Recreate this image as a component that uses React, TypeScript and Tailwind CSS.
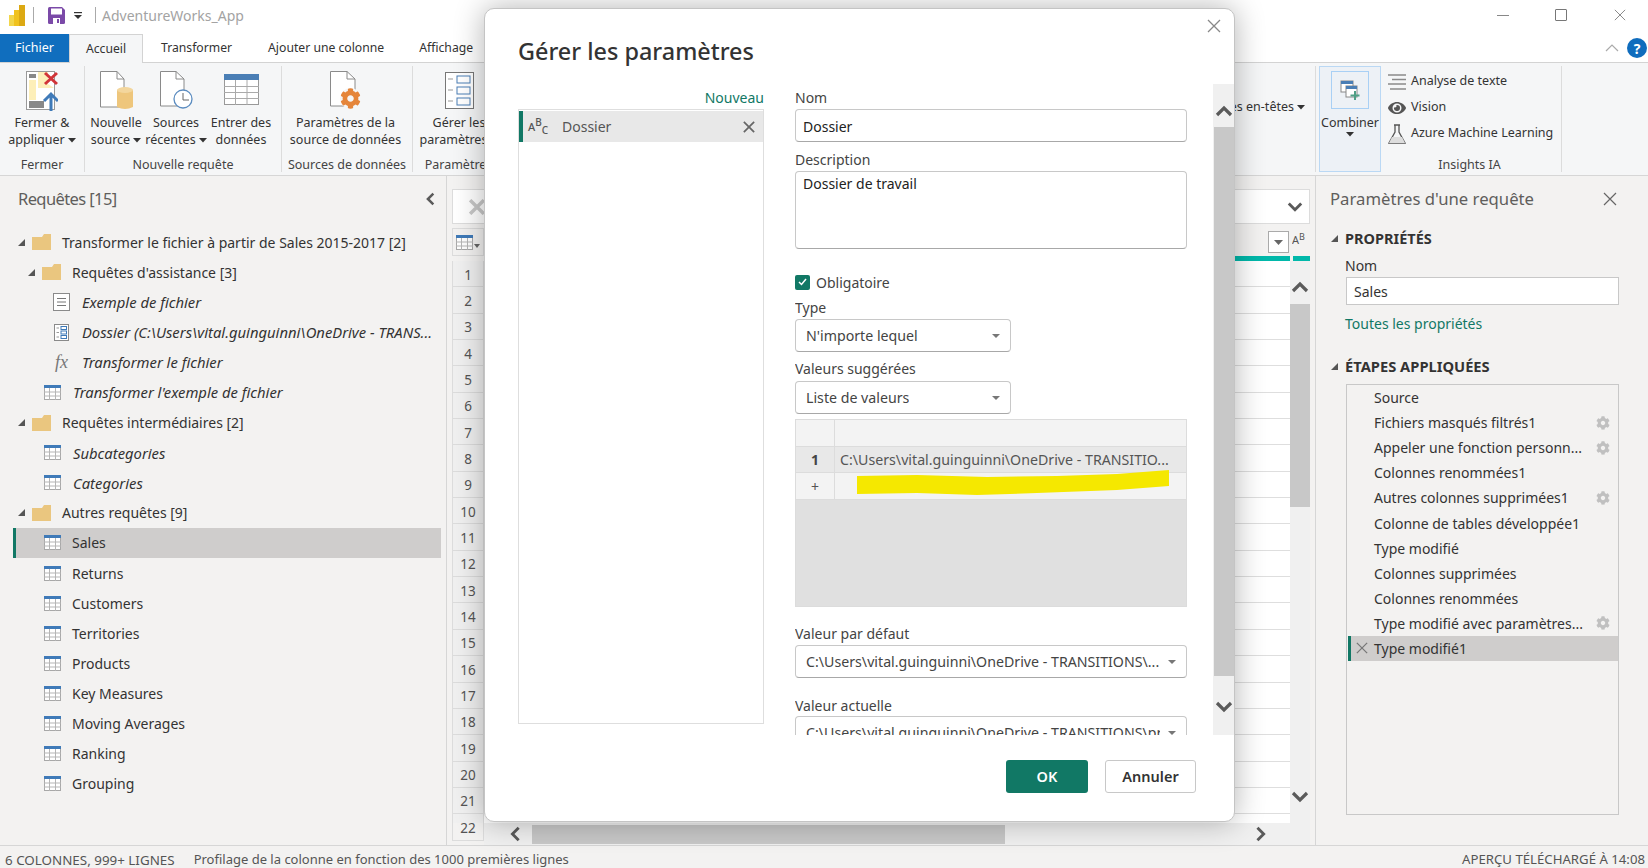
import React from 'react';
import { FaCog, FaEye } from 'react-icons/fa';

const Chev = ({ d, className = '' }: { d: 'up' | 'down' | 'left' | 'right'; className?: string }) => {
  const p = { up: '2,12 9,5 16,12', down: '2,5 9,12 16,5', left: '12,2 5,9 12,16', right: '5,2 12,9 5,16' }[d];
  return (
    <svg width="18" height="18" viewBox="0 0 18 18" className={className}>
      <polyline points={p} fill="none" stroke="#5a5a5a" strokeWidth="3.2" />
    </svg>
  );
};

const X = ({ s = 14, c = '#777', w = 1.3 }: { s?: number; c?: string; w?: number }) => (
  <svg width={s} height={s} viewBox="0 0 14 14">
    <path d="M1 1L13 13M13 1L1 13" stroke={c} strokeWidth={w} fill="none" />
  </svg>
);

const Tri = () => (
  <svg width="9" height="9" viewBox="0 0 9 9"><polygon points="8,1 8,8 1,8" fill="#555" /></svg>
);

const TableIco = () => (
  <svg width="17" height="15" viewBox="0 0 17 15">
    <rect x="0.5" y="0.5" width="16" height="14" fill="#fff" stroke="#a8a8a8" />
    <rect x="0" y="0" width="17" height="3" fill="#3f7ab8" />
    <path d="M0 7H17M0 11H17M5.5 3V15M11.5 3V15" stroke="#b5b5b5" strokeWidth="1" />
  </svg>
);

const Folder = () => (
  <svg width="19" height="16" viewBox="0 0 19 16">
    <path d="M0 3H10L12 0H19V16H0Z" fill="#eac67f" />
  </svg>
);

const DocIco = () => (
  <svg width="17" height="18" viewBox="0 0 17 18">
    <rect x="0.5" y="0.5" width="16" height="17" fill="#fff" stroke="#8a8a8a" />
    <path d="M4 5.5H13M4 9H13M4 12.5H13" stroke="#777" />
  </svg>
);

const ParamIco = () => (
  <svg width="15" height="17" viewBox="0 0 15 17">
    <rect x="0.5" y="0.5" width="14" height="16" fill="#fff" stroke="#8a8a8a" />
    <path d="M2.5 4H5M2.5 8.500H5M2.500 13H5" stroke="#999" />
    <rect x="7" y="2.500" width="5.500" height="3" fill="none" stroke="#3f7ab8" />
    <rect x="7" y="7" width="5.500" height="3" fill="none" stroke="#3f7ab8" />
    <rect x="7" y="11.500" width="5.500" height="3" fill="none" stroke="#3f7ab8" />
  </svg>
);

type Q = { n: string; pad: number; ico: 'f' | 't' | 'd' | 'p' | 'x'; it?: boolean; tri?: boolean; sel?: boolean };
const queries: Q[] = [
  { n: 'Transformer le fichier à partir de Sales 2015-2017 [2]', pad: 18, ico: 'f', tri: true },
  { n: "Requêtes d'assistance [3]", pad: 28, ico: 'f', tri: true },
  { n: 'Exemple de fichier', pad: 53, ico: 'd', it: true },
  { n: 'Dossier (C:\\Users\\vital.guinguinni\\OneDrive - TRANS...', pad: 53, ico: 'p', it: true },
  { n: 'Transformer le fichier', pad: 53, ico: 'x', it: true },
  { n: "Transformer l'exemple de fichier", pad: 44, ico: 't', it: true },
  { n: 'Requêtes intermédiaires [2]', pad: 18, ico: 'f', tri: true },
  { n: 'Subcategories', pad: 44, ico: 't', it: true },
  { n: 'Categories', pad: 44, ico: 't', it: true },
  { n: 'Autres requêtes [9]', pad: 18, ico: 'f', tri: true },
  { n: 'Sales', pad: 44, ico: 't', sel: true },
  { n: 'Returns', pad: 44, ico: 't' },
  { n: 'Customers', pad: 44, ico: 't' },
  { n: 'Territories', pad: 44, ico: 't' },
  { n: 'Products', pad: 44, ico: 't' },
  { n: 'Key Measures', pad: 44, ico: 't' },
  { n: 'Moving Averages', pad: 44, ico: 't' },
  { n: 'Ranking', pad: 44, ico: 't' },
  { n: 'Grouping', pad: 44, ico: 't' },
];

const steps: [string, boolean][] = [
  ['Source', false],
  ['Fichiers masqués filtrés1', true],
  ['Appeler une fonction personn...', true],
  ['Colonnes renommées1', false],
  ['Autres colonnes supprimées1', true],
  ['Colonne de tables développée1', false],
  ['Type modifié', false],
  ['Colonnes supprimées', false],
  ['Colonnes renommées', false],
  ['Type modifié avec paramètres...', true],
];

const Caret = () => (
  <svg width="8" height="5" viewBox="0 0 8 5" className="inline-block ml-[3px] align-middle"><polygon points="0,0 8,0 4,4.500" fill="#333" /></svg>
);

const RibbonBtn = ({ w, icon, l1, l2, caret }: { w: number; icon: React.ReactNode; l1: string; l2: string; caret?: boolean }) => (
  <div className="flex flex-col items-center shrink-0" style={{ width: w }}>
    <div className="h-[43px] flex items-start justify-center">{icon}</div>
    <div className="text-center text-[12.5px] leading-[17px] text-[#333] whitespace-nowrap">
      <div>{l1}</div>
      <div>{l2}{caret && <Caret />}</div>
    </div>
  </div>
);

const Group = ({ w, label, children }: { w: number; label: string; children: React.ReactNode }) => (
  <div className="flex flex-col my-[3px] border-r border-[#dcdcdc] shrink-0 overflow-hidden" style={{ width: w }}>
    <div className="flex-1 flex pt-[5px] justify-start">{children}</div>
    <div className="h-[16px] text-center text-[12.5px] leading-[18px] text-[#444] whitespace-nowrap">{label}</div>
  </div>
);

const Select = ({ text, w }: { text: string; w?: number }) => (
  <div className="h-[33px] shrink-0 flex items-center justify-between rounded-[4px] border border-[#c8c8c8] border-b-[#a8a8a8] bg-white pl-[10px] pr-[10px] text-[14.2px] text-[#444]" style={w ? { width: w } : undefined}>
    <span className="whitespace-nowrap overflow-hidden">{text}</span>
    <svg width="8" height="4" viewBox="0 0 8 4" className="shrink-0 ml-2"><polygon points="0,0 8,0 4,4" fill="#777" /></svg>
  </div>
);

const Label = ({ t, cls }: { t: string; cls: string }) => (
  <div className={`text-[14px] text-[#444] flex items-center ${cls}`}>{t}</div>
);

export default function App() {
  const rows = Array.from({ length: 22 }, (_, i) => i + 1);
  return (
    <div className="relative w-[1648px] h-[868px] overflow-hidden bg-[#f3f2f1] flex flex-col font-['Noto_Sans',sans-serif] text-[#333]">
      {/* title bar */}
      <div className="h-[34px] shrink-0 bg-white flex items-center relative">
        <svg width="16" height="21" viewBox="0 0 16 21" className="ml-[9px] -mt-[4px]">
          <rect x="0" y="10" width="6" height="11" fill="#f2d64b" />
          <rect x="5" y="5" width="6" height="16" fill="#f0c21e" />
          <rect x="10" y="0" width="6" height="21" fill="#dca913" />
        </svg>
        <div className="w-px h-[16px] bg-[#aaa] ml-[8px] -mt-[4px]" />
        <svg width="17" height="17" viewBox="0 0 17 17" className="ml-[14px] -mt-[4px]">
          <path d="M0 1.500Q0 0 1.500 0H14L17 3V15.500Q17 17 15.500 17H1.500Q0 17 0 15.500Z" fill="#7b4aa8" />
          <rect x="3" y="1.500" width="11" height="6" fill="#fff" />
          <rect x="5" y="11" width="7" height="6" fill="#fff" />
          <rect x="9" y="12" width="2" height="4" fill="#7b4aa8" />
        </svg>
        <svg width="8" height="8" viewBox="0 0 8 8" className="ml-[9px] -mt-[3px]">
          <rect x="0" y="0" width="8" height="1.200" fill="#333" /><polygon points="0,3 8,3 4,7" fill="#333" />
        </svg>
        <div className="w-px h-[16px] bg-[#aaa] ml-[13px] -mt-[4px]" />
        <div className="ml-[6px] -mt-[4px] text-[14px] text-[#a3a3a3]">AdventureWorks_App</div>
        <div className="flex-1" />
        <div className="flex items-center -mt-[4px]">
          <div className="w-[12px] h-px bg-[#888] mr-[46px]" />
          <div className="w-[12px] h-[12px] border border-[#777] rounded-[1px] mr-[47px]" />
          <div className="mr-[22px]"><X s={12} c="#777" w={1} /></div>
        </div>
      </div>
      {/* tabs */}
      <div className="h-[29px] shrink-0 bg-white flex items-stretch border-b border-[#d3d3d3] text-[12.2px] text-[#333] relative">
        <div className="w-[69px] bg-[#106ebe] text-white flex items-center justify-center text-[12.5px]">Fichier</div>
        <div className="w-[74px] h-[29px] bg-[#f5f6f7] border border-b-0 border-[#d3d3d3] flex items-center justify-center">Accueil</div>
        <div className="ml-[18px] flex items-center">Transformer</div>
        <div className="ml-[36px] flex items-center">Ajouter une colonne</div>
        <div className="ml-[35px] flex items-center">Affichage</div>
        <div className="flex-1" />
        <div className="flex items-center gap-[8px] pr-[1px]">
          <svg width="14" height="8" viewBox="0 0 14 8"><polyline points="1,7 7,1 13,7" fill="none" stroke="#aaa" strokeWidth="1.200" /></svg>
          <div className="w-[20px] h-[20px] rounded-full bg-[#0f6cbd] text-white text-[14px] font-bold flex items-center justify-center">?</div>
        </div>
      </div>
      {/* ribbon */}
      <div className="h-[113px] shrink-0 bg-[#f5f6f7] border-b border-[#d6d6d6] flex">
        <Group w={85} label="Fermer">
          <RibbonBtn w={84} l1="Fermer &" l2="appliquer" caret icon={
            <svg width="32" height="40" viewBox="0 0 32 40">
              <rect x="0.500" y="0.500" width="28" height="38" fill="#fff" stroke="#999" />
              <path d="M12 1H22V13L28 17H12Z" fill="#fdefb9" />
              <rect x="3" y="3" width="7" height="4" fill="#888" /><rect x="3" y="9" width="7" height="20" fill="#fdefb9" />
              <rect x="3" y="30" width="15" height="7" fill="#888" />
              <path d="M19 2L31 13M31 2L19 13" stroke="#d13438" strokeWidth="3" />
              <path d="M25 40V24M18 30L25 23L32 30" stroke="#3f7ab8" strokeWidth="3" fill="none" />
            </svg>} />
        </Group>
        <Group w={197} label="Nouvelle requête">
          <RibbonBtn w={62} l1="Nouvelle" l2="source" caret icon={
            <svg width="33" height="40" viewBox="0 0 33 40">
              <path d="M0.500 0.500H17L24 8V36H0.500Z" fill="#fff" stroke="#8a8a8a" />
              <path d="M17 0.500V8H24" fill="none" stroke="#8a8a8a" />
              <path d="M17 19Q25 16 33 19V36Q25 40 17 36Z" fill="#eec67c" />
              <ellipse cx="25" cy="19" rx="8" ry="3" fill="#f3d69d" />
            </svg>} />
          <RibbonBtn w={58} l1="Sources" l2="récentes" caret icon={
            <svg width="33" height="38" viewBox="0 0 33 38">
              <path d="M0.500 0.500H16L24 8V35H0.500Z" fill="#fff" stroke="#8a8a8a" />
              <path d="M16 0.500V8H24" fill="none" stroke="#8a8a8a" />
              <circle cx="23" cy="28" r="9" fill="#fff" stroke="#5b8cc0" strokeWidth="1.300" />
              <path d="M23 22V29H29" fill="none" stroke="#666" />
            </svg>} />
          <RibbonBtn w={72} l1="Entrer des" l2="données" icon={
            <svg width="35" height="31" viewBox="0 0 35 31" className="mt-[3px]">
              <rect x="0.500" y="0.500" width="34" height="30" fill="#fff" stroke="#999" />
              <rect width="35" height="6" fill="#4a7eb5" />
              <path d="M0 12.500H35M0 18.500H35M0 24.500H35M11.500 6V31M23 6V31" stroke="#aaa" />
            </svg>} />
        </Group>
        <Group w={131} label="Sources de données">
          <RibbonBtn w={127} l1="Paramètres de la" l2="source de données" icon={
            <div className="relative w-[32px] h-[38px]">
              <svg width="26" height="36" viewBox="0 0 26 36">
                <path d="M0.500 0.500H17L25 8V35H0.500Z" fill="#fff" stroke="#8a8a8a" />
                <path d="M17 0.500V8H25" fill="none" stroke="#8a8a8a" />
              </svg>
              <FaCog className="absolute left-[10px] top-[17px] bg-[#f5f6f7] rounded-full" size={21} color="#e5853a" />
            </div>} />
        </Group>
        <Group w={92} label="Paramètres">
          <RibbonBtn w={92} l1="Gérer les" l2="paramètres" caret icon={
            <svg width="29" height="37" viewBox="0 0 29 37" className="mt-[1px]">
              <rect x="0.500" y="0.500" width="28" height="36" fill="#fff" stroke="#777" />
              <path d="M3 7H8M3 18H8M3 29H8" stroke="#999" />
              <rect x="12" y="4" width="13" height="7" fill="none" stroke="#4a7eb5" />
              <rect x="12" y="15" width="13" height="7" fill="none" stroke="#4a7eb5" />
              <rect x="12" y="26" width="13" height="7" fill="none" stroke="#4a7eb5" />
            </svg>} />
        </Group>
        <div className="w-[811px] shrink-0 my-[3px] border-r border-[#dcdcdc] flex flex-col items-end pr-[10px] pt-[32px] text-[12.5px] text-[#333] whitespace-nowrap overflow-hidden">
          <div>Utiliser la première ligne pour les en-têtes<Caret /></div>
        </div>
        <div className="w-[62px] shrink-0 my-[3px] ml-[3px] bg-[#edf1f6] border border-[#bad8f4] flex flex-col items-center pt-[4px] text-[12.5px] leading-[17px]">
          <div className="w-[38px] h-[38px] border border-[#a9d0f5] flex items-center justify-center">
            <svg width="20" height="20" viewBox="0 0 20 20">
              <rect x="1" y="1" width="12" height="11" fill="#fff" stroke="#888" />
              <rect x="1" y="1" width="12" height="3" fill="#4a7eb5" />
              <rect x="6" y="6" width="11" height="11" fill="#fff" stroke="#888" />
              <rect x="6" y="6" width="11" height="3" fill="#4a7eb5" />
              <path d="M15 11V20M10.500 15.500H19.500" stroke="#4f9f86" strokeWidth="2" />
            </svg>
          </div>
          <div className="mt-[5px]">Combiner</div>
          <div className="mt-[1px]"><svg width="8" height="5" viewBox="0 0 8 5"><polygon points="0,0 8,0 4,4.500" fill="#333" /></svg></div>
        </div>
        <div className="w-[181px] shrink-0 my-[3px] border-r border-[#dcdcdc] flex flex-col pl-[7px] text-[12.5px] text-[#333]">
          <div className="flex flex-col gap-[9px] pt-[7px]">
            <div className="h-[17px] flex items-center gap-[5px]">
              <svg width="18" height="16" viewBox="0 0 18 16"><path d="M0 1H18M4 5.500H18M0 10H18M2 15H18" stroke="#8a8a8a" strokeWidth="1.300" /></svg>
              <span>Analyse de texte</span>
            </div>
            <div className="h-[17px] flex items-center gap-[5px]"><FaEye size={18} color="#555" /><span>Vision</span></div>
            <div className="h-[17px] flex items-center gap-[5px]">
              <svg width="18" height="20" viewBox="0 0 18 20"><path d="M6 1H12M7 1V8L1 19H17L11 8V1" fill="none" stroke="#555" strokeWidth="1.300" /><path d="M1 19H17L14 13H4Z" fill="#ddd" /></svg>
              <span>Azure Machine Learning</span>
            </div>
          </div>
          <div className="mt-auto h-[16px] text-center leading-[18px] text-[#444] pr-[10px]">Insights IA</div>
        </div>
        <div className="flex-1" />
      </div>
      {/* main */}
      <div className="flex-1 flex min-h-0">
        <div className="w-[447px] shrink-0 border-r border-[#d6d6d6] flex flex-col">
          <div className="h-[51px] shrink-0 flex items-center justify-between pl-[18px] pr-[8px] pb-[5px] text-[16.5px] tracking-[-0.6px] text-[#605e5c]">
            <span>Requêtes [15]</span>
            <Chev d="left" className="w-[14px] h-[14px]" />
          </div>
          <div className="flex flex-col">
            {queries.map((q) => (
              <div key={q.n} className={`h-[30.1px] flex items-center ml-[13px] w-[428px] ${q.sel ? 'bg-[#cfcdcc] border-l-[3px] border-[#117865]' : ''}`}>
                <div className="relative flex items-center" style={{ paddingLeft: q.pad - 13 - (q.sel ? 3 : 0) }}>
                  {q.tri && <div className="mr-[6px] -ml-[1px] flex"><Tri /></div>}
                  <div className={`flex justify-center ${q.ico === 'f' ? 'w-[19px] mr-[11px]' : q.it ? 'w-[17px] mr-[12px]' : 'w-[17px] mr-[11px]'}`}>
                    {q.ico === 'f' && <Folder />}
                    {q.ico === 't' && <TableIco />}
                    {q.ico === 'd' && <DocIco />}
                    {q.ico === 'p' && <ParamIco />}
                    {q.ico === 'x' && <span className="font-['Liberation_Serif',serif] italic text-[18px] leading-[17px] text-[#777]">fx</span>}
                  </div>
                  <span className={`whitespace-nowrap ${q.it ? 'italic text-[14.8px]' : 'text-[14px]'}`}>{q.n}</span>
                </div>
              </div>
            ))}
          </div>
        </div>
        {/* middle */}
        <div className="w-[869px] shrink-0 border-r border-[#d6d6d6] flex flex-col pl-[5px] pr-[5px] pt-[13px]">
          <div className="h-[35px] shrink-0 bg-white border border-[#dcdcdc] flex items-center justify-between px-[16px]">
            <X s={16} c="#c8c8c8" w={3} />
            <Chev d="down" className="w-[16px] h-[16px] -mr-[10px]" />
          </div>
          <div className="h-[33px] shrink-0 mt-[4px] flex">
            <div className="w-[32px] flex items-center justify-center gap-[1px] border border-[#dcdcdc] h-[28px]">
              <TableIco />
              <svg width="6" height="4" viewBox="0 0 6 4" className="mt-[8px]"><polygon points="0,0 6,0 3,4" fill="#666" /></svg>
            </div>
            <div className="flex-1" />
            <div className="w-[21px] flex flex-col"><div className="h-[22px] mt-[3px] bg-white border border-[#aaa] flex items-center justify-center"><svg width="9" height="5" viewBox="0 0 9 5"><polygon points="0,0 9,0 4.500,5" fill="#666" /></svg></div></div>
            <div className="w-[3px]" />
            <div className="w-[18px] text-[11px] overflow-hidden whitespace-nowrap pt-[4px] text-[#555]">A<sup className="text-[9px]">B</sup></div>
          </div>
          <div className="flex-1 flex min-h-0 relative">
            <div className="w-[32px] shrink-0 flex flex-col bg-[#f0f0f0]">
              {rows.map((r) => (
                <div key={r} className="h-[26.35px] shrink-0 border border-t-0 border-[#dcdcdc] flex items-center justify-center pt-[2px] text-[13.5px] text-[#555]">{r}</div>
              ))}
            </div>
            <div className="flex-1 flex flex-col bg-white">
              {rows.map((r) => (
                <div key={r} className="h-[26.35px] shrink-0 border-b border-[#dedede]" />
              ))}
            </div>
            <div className="w-[20px] shrink-0 bg-[#f0f0f0] flex flex-col items-center">
              <div className="h-[43px] flex items-start justify-center pt-[18px]"><Chev d="up" /></div>
              <div className="w-full h-[203px] bg-[#c8c8c8]" />
              <div className="flex-1" />
              <div className="h-[35px] flex items-start"><Chev d="down" /></div>
            </div>
            <div className="absolute left-[780px] -top-[5px] w-[58px] h-[5px] bg-[#01b8aa]" />
            <div className="absolute left-[841px] -top-[5px] w-[17px] h-[5px] bg-[#01b8aa]" />
          </div>
          <div className="h-[22px] shrink-0 bg-[#f0f0f0] flex items-center ml-[32px] relative">
            <Chev d="left" className="ml-[24px] w-[16px] h-[16px]" />
            <div className="w-[473px] h-[19px] bg-[#c8c8c8] ml-[8px]" />
            <Chev d="right" className="absolute left-[769px] w-[16px] h-[16px]" />
          </div>
        </div>
        {/* right */}
        <div className="flex-1 flex flex-col pl-[14px]">
          <div className="h-[47px] shrink-0 flex items-center justify-between pr-[31px] pb-[1px] text-[16.7px] text-[#605e5c]">
            <span>Paramètres d'une requête</span>
            <X s={14} c="#666" w={1.200} />
          </div>
          <div className="h-[31px] flex items-center gap-[6px] font-bold text-[14.5px] leading-none"><span className="flex"><Tri /></span>PROPRIÉTÉS</div>
          <div className="pl-[15px] h-[23px] flex items-center text-[14px]">Nom</div>
          <div className="ml-[16px] w-[273px] h-[28px] border border-[#c8c8c8] bg-white flex items-center pl-[7px] text-[14px]">Sales</div>
          <div className="pl-[15px] mt-[6px] h-[24px] flex items-center text-[14px] text-[#117865]">Toutes les propriétés</div>
          <div className="mt-[19px] h-[24px] flex items-center gap-[6px] font-bold text-[14.7px]"><span className="flex"><Tri /></span>ÉTAPES APPLIQUÉES</div>
          <div className="ml-[16px] w-[273px] h-[431px] mt-[6px] border border-[#c8c8c8] flex flex-col text-[14px]">
            {steps.map(([t, g]) => (
              <div key={t} className="h-[25.1px] shrink-0 flex items-center justify-between pl-[27px] pr-[8px]">
                <span className="whitespace-nowrap">{t}</span>
                {g && <FaCog size={14} color="#c0c0c0" />}
              </div>
            ))}
            <div className="h-[25.1px] shrink-0 ml-[1px] bg-[#cfcdcc] border-l-[3px] border-[#117865] flex items-center pl-[5px] gap-[6px]">
              <X s={12} c="#777" w={1.500} /><span>Type modifié1</span>
            </div>
          </div>
        </div>
      </div>
      {/* status */}
      <div className="h-[23px] shrink-0 border-t border-[#d6d6d6] bg-[#f3f2f1] flex items-center justify-between pl-[5px] pr-[3px] pt-[6px] text-[13px] text-[#555]">
        <div className="flex gap-[19px]"><span className="text-[13.4px]">6 COLONNES, 999+ LIGNES</span><span>Profilage de la colonne en fonction des 1000 premières lignes</span></div>
        <span className="text-[13.2px]">APERÇU TÉLÉCHARGÉ À 14:08</span>
      </div>

      {/* dialog */}
      <div className="absolute left-[484px] top-[8px] w-[751px] h-[814px] bg-white rounded-[10px] border border-[#c4c4c4] shadow-[0_0_30px_rgba(0,0,0,0.3)] flex flex-col">
        <div className="h-[75px] shrink-0 relative pl-[33px] pt-[24px] text-[23.4px] leading-[36px] text-[#333] font-medium">
          Gérer les paramètres
          <div className="absolute right-[13px] top-[10px]"><X s={14} c="#888" w={1.300} /></div>
        </div>
        <div className="h-[651px] shrink-0 flex pl-[33px]">
          <div className="w-[246px] shrink-0 flex flex-col">
            <div className="h-[25px] text-right text-[14px] text-[#117865] leading-[28px]">Nouveau</div>
            <div className="h-[615px] border border-[#dedede] pt-[1px]">
              <div className="h-[31px] bg-[#e8e8e8] border-l-[4px] border-[#117865] flex items-center justify-between pl-[5px] pr-[8px] text-[14px] text-[#555]">
                <div className="flex items-center">
                  <span className="text-[11px] leading-none text-[#555] w-[34px] font-medium">A<sup className="text-[10px]">B</sup><sub className="text-[10px]">C</sub></span>
                  <span>Dossier</span>
                </div>
                <X s={12} c="#666" w={2} />
              </div>
            </div>
          </div>
          <div className="w-[392px] shrink-0 ml-[31px] flex flex-col overflow-hidden">
            <Label t="Nom" cls="h-[25px] pt-[2px] shrink-0" />
            <div className="h-[33px] shrink-0 rounded-[4px] border border-[#c8c8c8] border-b-[#a8a8a8] flex items-center pl-[7px] pt-[1px] text-[14px] text-[#222]">Dossier</div>
            <Label t="Description" cls="h-[23px] mt-[6px] shrink-0" />
            <div className="h-[78px] shrink-0 rounded-[4px] border border-[#c8c8c8] border-b-[#a8a8a8] pl-[7px] pt-[1px] text-[14px] text-[#222]">Dossier de travail</div>
            <div className="h-[22px] mt-[22px] shrink-0 flex items-center gap-[6px] text-[14px] text-[#444]">
              <span className="w-[15px] h-[15px] rounded-[2px] bg-[#117865] flex items-center justify-center">
                <svg width="9" height="8" viewBox="0 0 9 8"><path d="M1 4L3.500 6.500L8 1" stroke="#fff" strokeWidth="1.500" fill="none" /></svg>
              </span>
              Obligatoire
            </div>
            <Label t="Type" cls="h-[23px] mt-[3px] shrink-0" />
            <Select text="N'importe lequel" w={216} />
            <Label t="Valeurs suggérées" cls="h-[25px] mt-[4px] shrink-0" />
            <Select text="Liste de valeurs" w={216} />
            <div className="h-[188px] shrink-0 mt-[5px] border border-[#dcdcdc] bg-[#e0e0e0] flex flex-col relative text-[14px]">
              <div className="h-[27px] shrink-0 flex border-b border-[#dcdcdc] bg-[#f3f3f3]"><div className="w-[39px] border-r border-[#dcdcdc]" /></div>
              <div className="h-[26px] shrink-0 flex border-b border-[#dcdcdc] bg-[#e8e8e8]">
                <div className="w-[39px] border-r border-[#dcdcdc] flex items-center justify-center font-bold text-[#444]">1</div>
                <div className="pl-[5px] flex items-center text-[#555] text-[14.2px] whitespace-nowrap">C:\Users\vital.guinguinni\OneDrive - TRANSITIO...</div>
              </div>
              <div className="h-[27px] shrink-0 flex border-b border-[#dcdcdc] bg-[#f3f3f3]">
                <div className="w-[39px] border-r border-[#dcdcdc] flex items-center justify-center text-[#555]">+</div>
              </div>
              <svg width="314" height="27" viewBox="0 0 314 27" className="absolute left-[61px] top-[50px]">
                <path d="M0 6L60 5L130 7L200 6L260 4L312 0V16L260 20L180 23L120 25L60 23L0 24Z" fill="#f5e800" />
              </svg>
            </div>
            <Label t="Valeur par défaut" cls="h-[24px] mt-[14px] shrink-0" />
            <Select text="C:\Users\vital.guinguinni\OneDrive - TRANSITIONS\..." />
            <Label t="Valeur actuelle" cls="h-[22px] mt-[16px] shrink-0" />
            <Select text="C:\Users\vital.guinguinni\OneDrive - TRANSITIONS\pr" />
          </div>
          <div className="ml-[26px] w-[21px] shrink-0 bg-[#f0f0f0] flex flex-col items-center pl-[1px]">
            <div className="h-[43px] flex items-center justify-center pt-[12px]"><Chev d="up" /></div>
            <div className="w-full h-[549px] bg-[#c8c8c8]" />
            <div className="flex-1 flex items-center justify-center pt-[2px]"><Chev d="down" /></div>
          </div>
        </div>
        <div className="flex-1 flex justify-end items-start pt-[25px] pr-[38px] gap-[17px] text-[14.5px] font-semibold">
          <div className="w-[82px] h-[33px] rounded-[3px] bg-[#117865] text-white flex items-center justify-center">OK</div>
          <div className="w-[91px] h-[33px] rounded-[3px] border border-[#c8c8c8] text-[#333] flex items-center justify-center">Annuler</div>
        </div>
      </div>
    </div>
  );
}
